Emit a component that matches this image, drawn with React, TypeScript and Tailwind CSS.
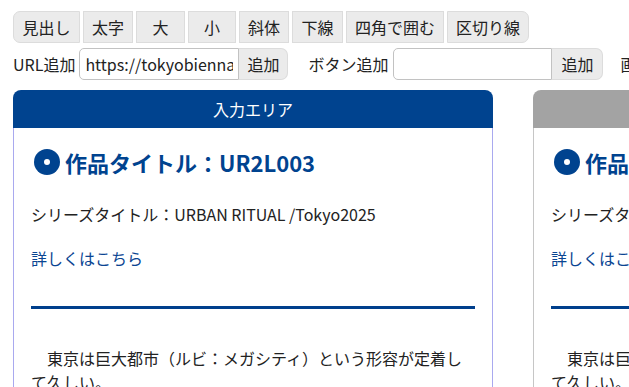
const font = { fontFamily: '"Noto Sans CJK JP", "Noto Sans", sans-serif' };

const tools = [
  { label: "見出し", w: "w-[67px]" },
  { label: "太字", w: "w-[50px]" },
  { label: "大", w: "w-[49px]" },
  { label: "小", w: "w-[48px]" },
  { label: "斜体", w: "w-[50px]" },
  { label: "下線", w: "w-[51px]" },
  { label: "四角で囲む", w: "w-[98px]" },
  { label: "区切り線", w: "w-[82px]" },
];

function Panel({ active }: { active: boolean }) {
  return (
    <div className="w-[480px] shrink-0">
      <div
        className={`h-[38px] rounded-t-[8px] flex items-center justify-center text-[16px] text-white ${
          active ? "bg-[#00438f]" : "bg-[#a3a3a3]"
        }`}
      >
        {active ? "入力エリア" : ""}
      </div>
      <div
        className={`border-x px-[17px] pt-[19px] pb-10 ${
          active ? "border-[#a9a9ef]" : "border-[#c6c6c6]"
        }`}
      >
        <h2 className="flex items-center text-[22px] font-bold leading-[30px] text-[#00438f] whitespace-nowrap">
          <span className="w-[26px] h-[26px] shrink-0 rounded-full bg-[#00438f] flex items-center justify-center ml-[3px] mr-[5px]">
            <span className="w-[6px] h-[6px] rounded-full bg-white" />
          </span>
          作品タイトル：UR2L003
        </h2>
        <p className="mt-[25px] text-[16px] leading-[24px] text-[#222]">
          シリーズタイトル：URBAN RITUAL /Tokyo2025
        </p>
        <a className="block mt-[20px] text-[16px] leading-[24px] text-[#0a4592]">詳しくはこちら</a>
        <div className="mt-[36px] h-[3px] bg-[#003f8c]" />
        <p className="mt-[37px] text-[16px] leading-[24px] text-[#222]">
          {"\u3000"}東京は巨大都市（ルビ：メガシティ）という形容が定着して久しい。
        </p>
      </div>
    </div>
  );
}

export default function App() {
  return (
    <div className="w-[629px] h-[387px] overflow-hidden bg-white pl-[13px] pt-[11px] text-[#222]" style={font}>
      <div className="flex gap-[3px]">
        {tools.map((t, i) => (
          <button
            key={t.label}
            className={`${t.w} h-[32px] shrink-0 bg-[#ebebeb] border border-[#dcdcdc] text-[16px] text-[#222] ${
              i === 0 ? "rounded-l-[7px]" : ""
            } ${i === tools.length - 1 ? "rounded-r-[7px]" : ""}`}
          >
            {t.label}
          </button>
        ))}
      </div>
      <div className="flex items-center mt-[5px] text-[16px] whitespace-nowrap">
        <span className="mr-[4px]">URL追加</span>
        <input
          readOnly
          value="https://tokyobiennale.jp/"
          className="w-[160px] h-[32px] shrink-0 border border-[#c2c2c2] rounded-l-[5px] px-[5px] text-[16px] text-[#222] outline-none"
          style={font}
        />
        <button className="w-[49px] h-[32px] shrink-0 bg-[#ebebeb] border border-l-0 border-[#dcdcdc] rounded-r-[7px]">
          追加
        </button>
        <span className="ml-[20px] mr-[5px]">ボタン追加</span>
        <input
          readOnly
          className="w-[159px] h-[32px] shrink-0 border border-[#c2c2c2] rounded-l-[5px] px-[5px] outline-none"
        />
        <button className="w-[51px] h-[32px] shrink-0 bg-[#ebebeb] border border-l-0 border-[#dcdcdc] rounded-r-[7px]">
          追加
        </button>
        <span className="ml-[17px]">画像追加</span>
      </div>
      <div className="flex gap-[40px] mt-[10px]">
        <Panel active />
        <Panel active={false} />
      </div>
    </div>
  );
}
